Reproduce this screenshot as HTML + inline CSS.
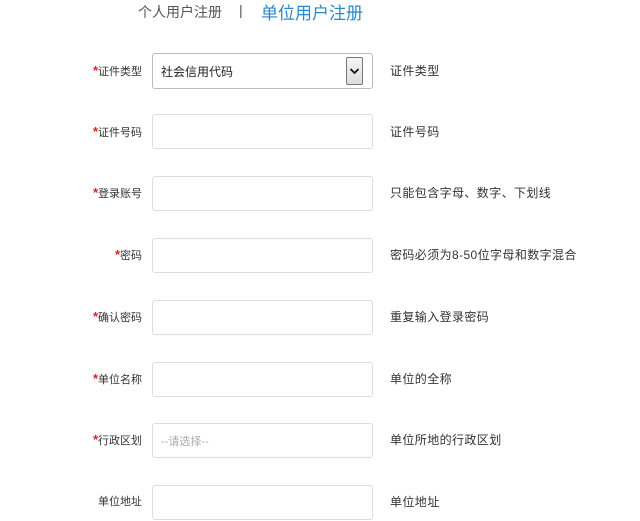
<!DOCTYPE html>
<html><head><meta charset="utf-8"><style>
body{margin:0;width:640px;height:521px;background:#fff;font-family:"Liberation Sans","Noto Sans CJK SC",sans-serif;position:relative;overflow:hidden}
.a{position:absolute;white-space:nowrap}
.lab{position:absolute;right:498px;font-size:11px;color:#333;line-height:14px}
.lab b{color:#e02020;font-weight:bold;font-size:13px}
.in{position:absolute;left:152px;width:219px;height:33px;border:1px solid #ddd;border-radius:3px;box-sizing:content-box}
.h{position:absolute;left:390px;font-size:12px;letter-spacing:0.4px;color:#333;line-height:14px}
</style></head><body>
<div class="a" style="left:138px;top:2px;font-size:14px;color:#555">个人用户注册</div>
<div class="a" style="left:239px;top:2px;font-size:14px;color:#555">|</div>
<div class="a" style="left:261px;top:-1px;font-size:17px;color:#2a87c8">单位用户注册</div>

<div class="lab" style="top:64px"><b>*</b>证件类型</div>
<div class="in" style="top:53px;border-color:#bbb;height:34px"></div>
<div class="a" style="left:161px;top:63px;font-size:12px;color:#222">社会信用代码</div>
<div class="a" style="left:346px;top:57px;width:15px;height:26px;border:1px solid #777;background:linear-gradient(#f4f4f4,#ddd);border-radius:2px"><svg width="15" height="26"><path d="M3.5 11 L7.5 15 L11.5 11" stroke="#111" stroke-width="1.8" fill="none"/></svg></div>
<div class="h" style="top:64px">证件类型</div>

<div class="lab" style="top:125px"><b>*</b>证件号码</div>
<div class="in" style="top:114px"></div>
<div class="h" style="top:125px">证件号码</div>

<div class="lab" style="top:186px"><b>*</b>登录账号</div>
<div class="in" style="top:176px"></div>
<div class="h" style="top:186px">只能包含字母、数字、下划线</div>

<div class="lab" style="top:248px"><b>*</b>密码</div>
<div class="in" style="top:238px"></div>
<div class="h" style="top:248px">密码必须为8-50位字母和数字混合</div>

<div class="lab" style="top:310px"><b>*</b>确认密码</div>
<div class="in" style="top:300px"></div>
<div class="h" style="top:310px">重复输入登录密码</div>

<div class="lab" style="top:372px"><b>*</b>单位名称</div>
<div class="in" style="top:362px"></div>
<div class="h" style="top:372px">单位的全称</div>

<div class="lab" style="top:433px"><b>*</b>行政区划</div>
<div class="in" style="top:423px"></div>
<div class="a" style="left:161px;top:433px;font-size:11px;color:#aaa">--请选择--</div>
<div class="h" style="top:433px">单位所地的行政区划</div>

<div class="lab" style="top:495px">单位地址</div>
<div class="in" style="top:485px"></div>
<div class="h" style="top:495px">单位地址</div>
</body></html>
